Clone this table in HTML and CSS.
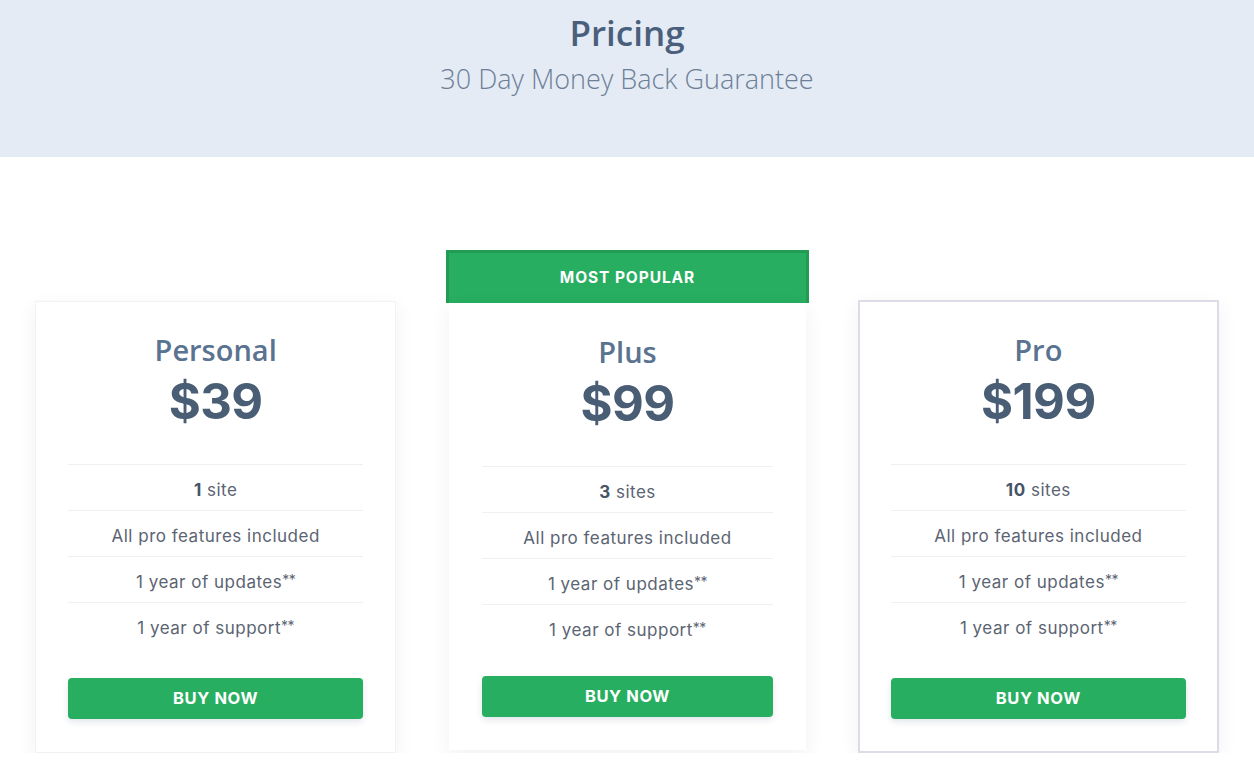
FILE: index.html
```html
<!DOCTYPE html>
<html lang="en">
<head>
<meta charset="utf-8">
<title>Pricing</title>
<link rel="stylesheet" href="styles.css">
</head>
<body>
<header class="hero">
  <h1 class="hero-title">Pricing</h1>
  <p class="hero-sub">30 Day Money Back Guarantee</p>
</header>
<main class="plans">
  <section class="plan plan-personal">
    <h2 class="plan-name">Personal</h2>
    <div class="plan-price">$39</div>
    <ul class="plan-features">
      <li><b>1</b> site</li>
      <li>All pro features included</li>
      <li>1 year of updates<span class="note">**</span></li>
      <li>1 year of support<span class="note">**</span></li>
    </ul>
    <a class="buy" href="#">BUY NOW</a>
  </section>
  <section class="plan-popular">
    <div class="popular-badge">MOST POPULAR</div>
    <div class="plan plan-plus">
      <h2 class="plan-name">Plus</h2>
      <div class="plan-price">$99</div>
      <ul class="plan-features">
        <li><b>3</b> sites</li>
        <li>All pro features included</li>
        <li>1 year of updates<span class="note">**</span></li>
        <li>1 year of support<span class="note">**</span></li>
      </ul>
      <a class="buy" href="#">BUY NOW</a>
    </div>
  </section>
  <section class="plan plan-pro">
    <h2 class="plan-name">Pro</h2>
    <div class="plan-price">$199</div>
    <ul class="plan-features">
      <li><b>10</b> sites</li>
      <li>All pro features included</li>
      <li>1 year of updates<span class="note">**</span></li>
      <li>1 year of support<span class="note">**</span></li>
    </ul>
    <a class="buy" href="#">BUY NOW</a>
  </section>
</main>
</body>
</html>
```
FILE: styles.css
```css
* { box-sizing: border-box; }
html, body { margin: 0; padding: 0; background: #ffffff; }
body { font-family: "Open Sans", "Liberation Sans", sans-serif; }

.hero {
  background: #e4ebf4;
  height: 157px;
  text-align: center;
  padding-top: 11px;
}
.hero-title {
  margin: 0;
  font-family: "Open Sans", sans-serif;
  font-weight: 600;
  font-size: 35px;
  line-height: 44px;
  color: #4a5f7c;
}
.hero-sub {
  margin: 4px 0 0;
  font-family: "Open Sans", sans-serif;
  font-weight: 300;
  font-size: 27px;
  line-height: 40px;
  color: #6d7f98;
}

.plans {
  width: 1184px;
  margin: 93px auto 0;
  display: grid;
  grid-template-columns: repeat(3, 1fr);
  column-gap: 50px;
  align-items: start;
}

.plan {
  background: #fff;
  text-align: center;
  padding: 31px 32px 33px;
  border: 1px solid #f1f2f4;
  box-shadow: 0 6px 18px rgba(40, 50, 70, 0.07);
}
.plan-personal { margin-top: 51px; }
.plan-pro {
  margin-top: 50px;
  border: 2px solid #dcdce6;
  padding: 31px 31px 32px;
}

.plan-popular {
  margin: 0 -1px 0 0;
}
.popular-badge {
  height: 53px;
  background: #27ae60;
  border: 3px solid #229c55;
  border-bottom: 0;
  color: #fff;
  font-family: "Inter", sans-serif;
  font-weight: 700;
  font-size: 15.5px;
  line-height: 50px;
  text-align: center;
  letter-spacing: 0.9px;
}
.plan-plus {
  margin: 0 3px;
  border: 0;
  padding: 32px 33px 33px;
}
.plan-plus .buy { margin-top: 26px; }

.plan-name {
  margin: 0;
  font-family: "Open Sans", sans-serif;
  font-weight: 600;
  font-size: 29px;
  line-height: 34px;
  color: #5a7390;
}
.plan-price {
  margin-top: 7px;
  font-family: "Inter", sans-serif;
  font-weight: 700;
  font-size: 49px;
  line-height: 56px;
  color: #495d75;
  letter-spacing: -0.5px;
}

.plan-features {
  list-style: none;
  margin: 34px 0 0;
  padding: 0;
}
.plan-features li {
  border-top: 1px solid #eef0f3;
  height: 46px;
  line-height: 50px;
  font-family: "Inter", sans-serif;
  font-size: 17px;
  letter-spacing: 0.5px;
  color: #5b6472;
}
.plan-features li b { font-weight: 700; color: #465466; }
.plan-features .note {
  font-size: 14px;
  letter-spacing: -0.5px;
  vertical-align: 3px;
  line-height: 1;
}

.buy {
  display: block;
  margin-top: 30px;
  height: 41px;
  line-height: 41px;
  background: #27ae60;
  border-radius: 4px;
  color: #fff;
  text-decoration: none;
  font-family: "Inter", sans-serif;
  font-weight: 700;
  font-size: 16.5px;
  letter-spacing: 0.6px;
  box-shadow: 0 3px 6px rgba(60, 80, 120, 0.15);
}
```
